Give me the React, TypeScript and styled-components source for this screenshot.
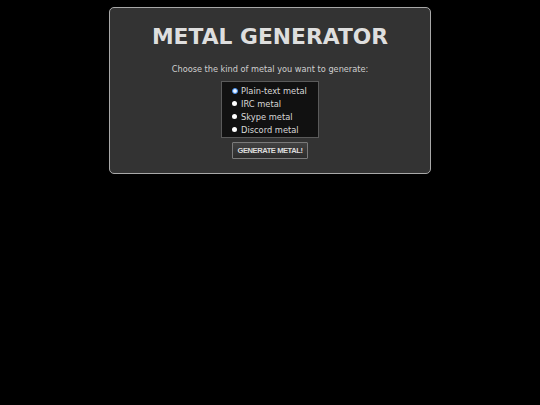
import React, { useState } from "react";
import styled, { createGlobalStyle } from "styled-components";

const Global = createGlobalStyle`
  html, body { margin: 0; padding: 0; background: #000; }
  body { font-family: "DejaVu Sans", Verdana, sans-serif; }
`;

const Panel = styled.main`
  box-sizing: border-box;
  width: 322px;
  margin: 7px auto 0;
  padding: 16px 0 14px;
  background: #333333;
  border: 1px solid #a8a8a8;
  border-radius: 5px;
  display: flex;
  flex-direction: column;
  align-items: center;
`;

const Title = styled.h1`
  margin: 0;
  font-size: 21.8px;
  line-height: 25px;
  font-weight: bold;
  color: #dedede;
`;

const Prompt = styled.p`
  margin: 15px 0 0;
  font-size: 8.2px;
  line-height: 10px;
  color: #cfcfcf;
`;

const Choices = styled.div`
  box-sizing: border-box;
  width: 98px;
  margin-top: 7px;
  padding: 2px 0 1px 10px;
  background: #111111;
  border: 1px solid #5a5a5a;
  display: flex;
  flex-direction: column;
`;

const Choice = styled.label`
  display: flex;
  align-items: center;
  gap: 4px;
  height: 13px;
  font-size: 8.3px;
  color: #d8d8d8;
  cursor: pointer;
`;

const Dot = styled.input`
  appearance: none;
  box-sizing: border-box;
  margin: 0;
  width: 5px;
  height: 5px;
  border-radius: 50%;
  background: #ffffff;
  flex: none;
  &:checked {
    width: 6px;
    height: 6px;
    margin-left: -0.5px;
    margin-right: -0.5px;
    background: #e8f1ff;
    border: 1.6px solid #3f8ef2;
  }
`;

const Button = styled.button`
  box-sizing: border-box;
  margin-top: 4px;
  width: 76px;
  height: 17px;
  padding: 0;
  font-family: "Liberation Sans", Arial, sans-serif;
  font-weight: bold;
  font-size: 7.6px;
  letter-spacing: -0.45px;
  color: #dcdcdc;
  background: linear-gradient(#424242, #2c2c2c);
  border: 1px solid #7a7a7a;
  border-radius: 1px;
  cursor: pointer;
`;

const options = ["Plain-text metal", "IRC metal", "Skype metal", "Discord metal"];

export default function App() {
  const [sel, setSel] = useState(0);
  return (
    <>
      <Global />
      <Panel>
        <Title>METAL GENERATOR</Title>
        <Prompt>Choose the kind of metal you want to generate:</Prompt>
        <Choices>
          {options.map((o, i) => (
            <Choice key={o}>
              <Dot type="radio" name="kind" checked={sel === i} onChange={() => setSel(i)} />
              {o}
            </Choice>
          ))}
        </Choices>
        <Button>GENERATE METAL!</Button>
      </Panel>
    </>
  );
}
